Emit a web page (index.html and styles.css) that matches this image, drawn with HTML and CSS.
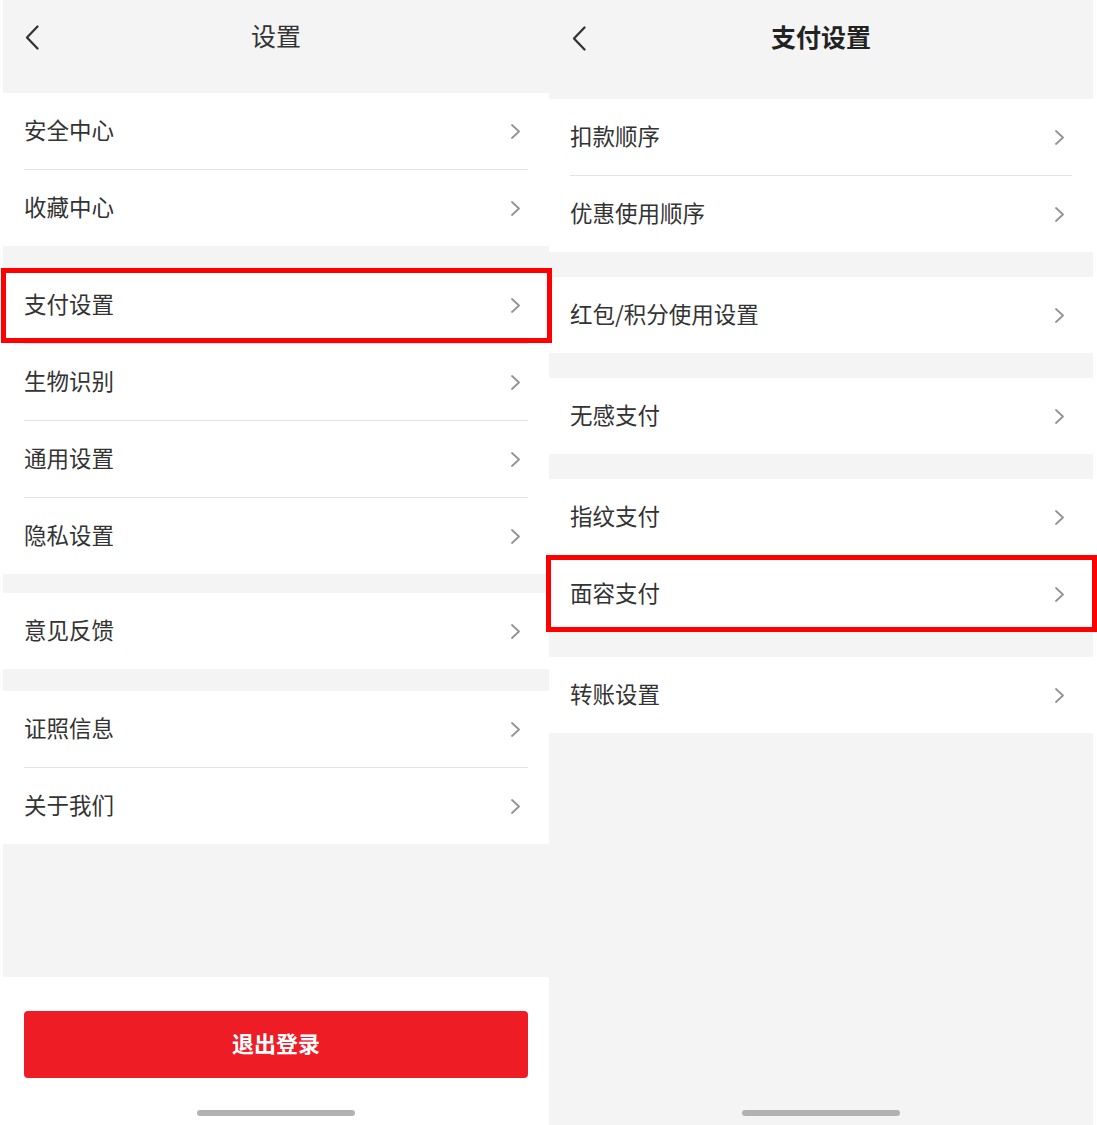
FILE: index.html
```html
<!DOCTYPE html>
<html lang="zh-CN">
<head>
<meta charset="utf-8">
<title>设置</title>
<link rel="stylesheet" href="styles.css">
</head>
<body>
<div class="screen">
  <section class="panel panel-left">
    <header class="nav nav-left">
      <svg class="back" viewBox="0 0 14 25" width="14" height="25"><path d="M12.5 1.5 L2 12.5 L12.5 23.5"/></svg>
      <h1 class="title">设置</h1>
      <span></span>
    </header>
    <div class="group g1">
      <div class="row"><div class="row-inner"><span class="label">安全中心</span><svg class="chev" viewBox="0 0 9 15" width="9" height="15"><path d="M1 1 L8 7.5 L1 14"/></svg></div></div>
      <div class="row"><div class="row-inner"><span class="label">收藏中心</span><svg class="chev" viewBox="0 0 9 15" width="9" height="15"><path d="M1 1 L8 7.5 L1 14"/></svg></div></div>
    </div>
    <div class="group gl2">
      <div class="row hl hl-left"><div class="row-inner"><span class="label">支付设置</span><svg class="chev" viewBox="0 0 9 15" width="9" height="15"><path d="M1 1 L8 7.5 L1 14"/></svg></div></div>
      <div class="row"><div class="row-inner"><span class="label">生物识别</span><svg class="chev" viewBox="0 0 9 15" width="9" height="15"><path d="M1 1 L8 7.5 L1 14"/></svg></div></div>
      <div class="row"><div class="row-inner"><span class="label">通用设置</span><svg class="chev" viewBox="0 0 9 15" width="9" height="15"><path d="M1 1 L8 7.5 L1 14"/></svg></div></div>
      <div class="row"><div class="row-inner"><span class="label">隐私设置</span><svg class="chev" viewBox="0 0 9 15" width="9" height="15"><path d="M1 1 L8 7.5 L1 14"/></svg></div></div>
    </div>
    <div class="group gl3">
      <div class="row"><div class="row-inner"><span class="label">意见反馈</span><svg class="chev" viewBox="0 0 9 15" width="9" height="15"><path d="M1 1 L8 7.5 L1 14"/></svg></div></div>
    </div>
    <div class="group gl4">
      <div class="row"><div class="row-inner"><span class="label">证照信息</span><svg class="chev" viewBox="0 0 9 15" width="9" height="15"><path d="M1 1 L8 7.5 L1 14"/></svg></div></div>
      <div class="row"><div class="row-inner"><span class="label">关于我们</span><svg class="chev" viewBox="0 0 9 15" width="9" height="15"><path d="M1 1 L8 7.5 L1 14"/></svg></div></div>
    </div>
    <div class="spacer"></div>
    <footer class="footer">
      <button class="logout">退出登录</button>
      <div class="home-bar"></div>
    </footer>
  </section>

  <section class="panel panel-right">
    <header class="nav nav-right">
      <svg class="back" viewBox="0 0 14 25" width="14" height="25"><path d="M12.5 1.5 L2 12.5 L12.5 23.5"/></svg>
      <h1 class="title title-bold">支付设置</h1>
      <span></span>
    </header>
    <div class="group g1">
      <div class="row"><div class="row-inner"><span class="label">扣款顺序</span><svg class="chev" viewBox="0 0 9 15" width="9" height="15"><path d="M1 1 L8 7.5 L1 14"/></svg></div></div>
      <div class="row"><div class="row-inner"><span class="label">优惠使用顺序</span><svg class="chev" viewBox="0 0 9 15" width="9" height="15"><path d="M1 1 L8 7.5 L1 14"/></svg></div></div>
    </div>
    <div class="group gr">
      <div class="row"><div class="row-inner"><span class="label">红包/积分使用设置</span><svg class="chev" viewBox="0 0 9 15" width="9" height="15"><path d="M1 1 L8 7.5 L1 14"/></svg></div></div>
    </div>
    <div class="group gr">
      <div class="row"><div class="row-inner"><span class="label">无感支付</span><svg class="chev" viewBox="0 0 9 15" width="9" height="15"><path d="M1 1 L8 7.5 L1 14"/></svg></div></div>
    </div>
    <div class="group gr">
      <div class="row"><div class="row-inner"><span class="label">指纹支付</span><svg class="chev" viewBox="0 0 9 15" width="9" height="15"><path d="M1 1 L8 7.5 L1 14"/></svg></div></div>
      <div class="row hl hl-right"><div class="row-inner"><span class="label">面容支付</span><svg class="chev" viewBox="0 0 9 15" width="9" height="15"><path d="M1 1 L8 7.5 L1 14"/></svg></div></div>
    </div>
    <div class="group gr">
      <div class="row"><div class="row-inner"><span class="label">转账设置</span><svg class="chev" viewBox="0 0 9 15" width="9" height="15"><path d="M1 1 L8 7.5 L1 14"/></svg></div></div>
    </div>
    <div class="spacer"></div>
    <footer class="footer footer-plain">
      <div class="home-bar"></div>
    </footer>
  </section>
</div>
</body>
</html>
```

FILE: styles.css
```css
* { box-sizing: border-box; }
html, body {
  margin: 0;
  padding: 0;
  background: #ffffff;
}
body {
  font-family: "Noto Sans CJK SC", "Noto Sans", sans-serif;
  color: #333333;
}
.screen {
  display: flex;
  width: 1097px;
  height: 1125px;
  padding-left: 3px;
  overflow: hidden;
}
.panel {
  display: flex;
  flex-direction: column;
  height: 1125px;
  background: #f4f4f4;
}
.panel-left { width: 546px; }
.panel-right { width: 544px; }

.nav {
  display: grid;
  grid-template-columns: 1fr auto 1fr;
  align-items: center;
  padding: 0 22px;
}
.nav-left { height: 74px; margin-bottom: 19px; }
.nav-right { height: 76px; margin-bottom: 23px; padding: 0 23px; }
.back {
  display: block;
  fill: none;
  stroke: #333333;
  stroke-width: 2.3;
  stroke-linecap: round;
  stroke-linejoin: round;
}
.title {
  margin: 0;
  padding-bottom: 4px;
  font-size: 25px;
  font-weight: 400;
  line-height: 30px;
  color: #333333;
}
.title-bold {
  font-weight: 700;
  color: #222222;
}

.group { background: #ffffff; }
.gl2 { margin-top: 22px; }
.gl3 { margin-top: 19px; }
.gl4 { margin-top: 22px; }
.gr { margin-top: 25px; }

.row { display: block; }
.row-inner {
  display: flex;
  align-items: center;
  justify-content: space-between;
  height: 77px;
  margin: 0 21px;
  padding-right: 8px;
  border-bottom: 1px solid #e3e3e3;
}
.row:last-child .row-inner {
  height: 76px;
  border-bottom: none;
}
.hl-left .row-inner { height: 76px; }
.label {
  font-size: 22.5px;
  line-height: 30px;
  padding-bottom: 5px;
  color: #333333;
}
.chev {
  display: block;
  fill: none;
  stroke: #939393;
  stroke-width: 1.8;
  stroke-linecap: round;
  stroke-linejoin: round;
}

.hl { position: relative; }
.hl::after {
  content: "";
  position: absolute;
  border: 5px solid #ff0000;
  z-index: 2;
  pointer-events: none;
}
.hl-left::after { top: 0; bottom: 1px; left: -2px; right: -3px; }
.hl-right::after { top: -1px; bottom: 0; left: -3px; right: -4px; }

.spacer { flex: 1; }

.footer {
  display: flex;
  flex-direction: column;
  align-items: center;
  height: 148px;
  background: #ffffff;
  padding-top: 34px;
}
.footer-plain {
  background: transparent;
  justify-content: flex-end;
  padding-top: 0;
  padding-bottom: 9px;
}
.logout {
  width: 504px;
  height: 67px;
  border: none;
  border-radius: 4px;
  background: #ee1c24;
  color: #ffffff;
  font-family: "Noto Sans CJK SC", "Noto Sans", sans-serif;
  font-size: 22px;
  font-weight: 700;
  padding: 0 0 5px;
}
.home-bar {
  width: 158px;
  height: 6px;
  border-radius: 3px;
  background: #b2b2b2;
}
.footer .logout + .home-bar { margin-top: 32px; }
```
